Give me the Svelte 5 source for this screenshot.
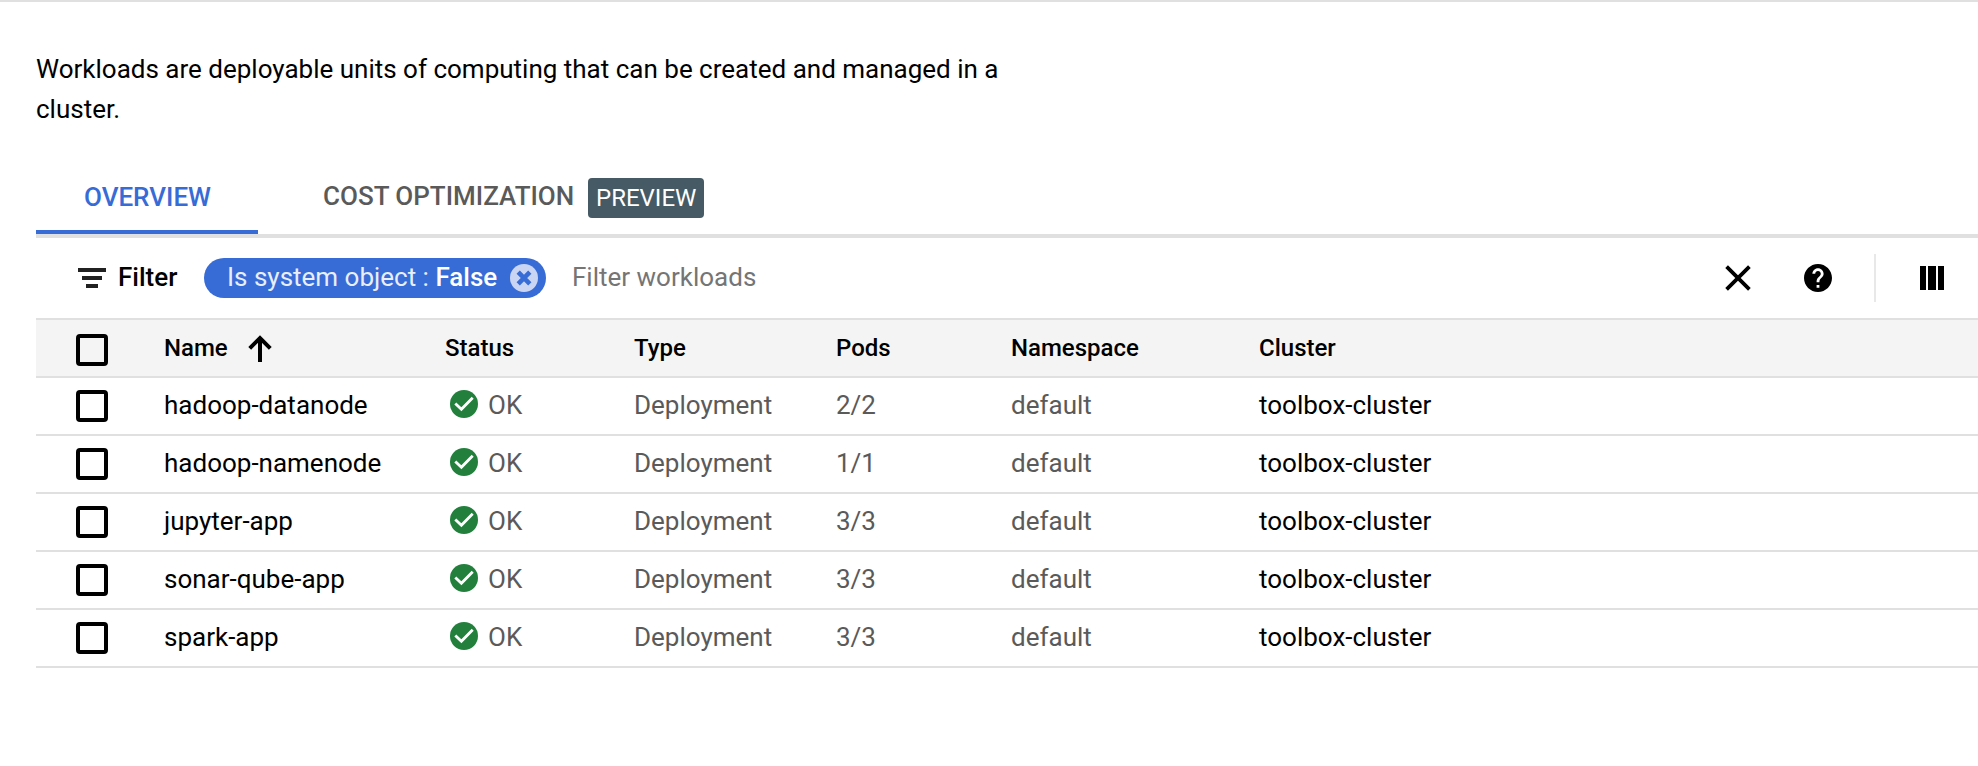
<script>
  const columns = ['Name', 'Status', 'Type', 'Pods', 'Namespace', 'Cluster'];
  const workloads = [
    { name: 'hadoop-datanode', pods: '2/2' },
    { name: 'hadoop-namenode', pods: '1/1' },
    { name: 'jupyter-app', pods: '3/3' },
    { name: 'sonar-qube-app', pods: '3/3' },
    { name: 'spark-app', pods: '3/3' }
  ];
</script>

<main>
  <p class="intro">Workloads are deployable units of computing that can be created and managed in a cluster.</p>

  <nav class="tabs">
    <div class="tab active">OVERVIEW</div>
    <div class="tab cost"><span class="label">COST OPTIMIZATION</span><span class="badge">PREVIEW</span></div>
  </nav>

  <section class="toolbar">
    <svg class="lines" width="28" height="20" viewBox="0 0 28 20" fill="#212121"><path d="M0 0h28v4H0zM4 8h20v4H4zM8 16h12v4H8z" /></svg>
    <span class="filter">Filter</span>
    <div class="chip">
      <span class="chip-text">Is system object : <b>False</b></span>
      <svg width="28" height="28" viewBox="0 0 28 28"><circle cx="14" cy="14" r="14" fill="#c9d5f3" /><path d="M8.2 8.2 19.8 19.8M19.8 8.2 8.2 19.8" stroke="#376bd6" stroke-width="4.6" /></svg>
    </div>
    <span class="placeholder">Filter workloads</span>
    <div class="actions">
      <svg class="clear" width="26" height="26" viewBox="0 0 26 26"><path d="M1.6 1.6 24.4 24.4M24.4 1.6 1.6 24.4" stroke="#000" stroke-width="3.8" /></svg>
      <svg class="help" width="28" height="28" viewBox="2 2 20 20"><path d="M12 2C6.48 2 2 6.48 2 12s4.480 10 10 10 10-4.480 10-10S17.520 2 12 2zm1 17h-2v-2h2v2zm2.070-7.750-.9.920C13.450 12.900 13 13.500 13 15h-2v-.5c0-1.100.45-2.100 1.170-2.830l1.240-1.260c.37-.36.59-.86.59-1.410 0-1.100-.9-2-2-2s-2 .9-2 2H8c0-2.210 1.790-4 4-4s4 1.790 4 4c0 .88-.36 1.680-.93 2.250z" /></svg>
      <span class="divider"></span>
      <svg class="cols" width="24" height="24" viewBox="0 0 24 24"><path d="M0 0h6v24H0zM8 0h8v24H8zM18 0h6v24h-6z" /></svg>
    </div>
  </section>

  <section class="table">
    <div class="row head">
      <span class="box"></span>
      {#each columns as column, i}
        <span class="cell">{column}{#if i === 0}<svg class="arrow" width="24" height="28" viewBox="0 0 24 28"><path d="M12 27V3M1.700 13.300 12 3l10.300 10.300" fill="none" stroke="#000" stroke-width="4" /></svg>{/if}</span>
      {/each}
    </div>
    {#each workloads as item}
      <div class="row">
        <span class="box"></span>
        <span class="cell dark">{item.name}</span>
        <span class="cell status"><svg width="28" height="28" viewBox="0 0 28 28"><circle cx="14" cy="14" r="14" fill="#22803c" /><path d="M5.300 13.400 11.400 19.300 22.700 7.800" fill="none" stroke="#fff" stroke-width="2.800" /></svg>OK</span>
        <span class="cell">Deployment</span>
        <span class="cell">{item.pods}</span>
        <span class="cell">default</span>
        <span class="cell dark">toolbox-cluster</span>
      </div>
    {/each}
  </section>
</main>

<style>
  :global(body) { background: #fff; }
  main {
    box-sizing: border-box;
    height: 766px;
    padding-left: 36px;
    border-top: 2px solid #e0e0e0;
    overflow: hidden;
    font-family: Roboto, sans-serif;
    font-size: 26px;
    color: #000;
    white-space: nowrap;
  }
  svg { display: block; flex: none; }
  .intro { width: 980px; height: 80px; margin: 0; padding-top: 47px; line-height: 40px; white-space: normal; }
  .tabs { display: flex; height: 105px; border-bottom: 4px solid #e0e0e0; font-weight: 500; color: #5a5a5a; }
  .tab { box-sizing: border-box; display: flex; align-items: flex-start; padding-top: 48px; line-height: 40px; }
  .active { width: 222px; padding-left: 48px; color: #376bd6; border-bottom: 4px solid #376bd6; }
  .cost { padding-left: 65px; }
  .label { margin-top: -1px; width: 265px; }
  .badge { box-sizing: border-box; width: 116px; height: 40px; margin-top: 1px; padding-left: 8px; border-radius: 4px; background: #455a64; color: #fff; font-weight: 400; font-size: 24px; line-height: 40px; }
  .toolbar { display: flex; align-items: center; height: 80px; padding-left: 42px; }
  .filter { width: 87px; margin-left: 12px; font-weight: 500; line-height: 40px; margin-top: -2px; }
  .chip { box-sizing: border-box; display: flex; align-items: center; justify-content: space-between; width: 342px; height: 40px; margin-left: -1px; padding: 0 8px 0 23px; border-radius: 20px; background: #376bd6; color: #e8eefa; line-height: 36px; }
  .chip-text { margin-top: -2px; }
  .chip b { font-weight: 500; color: #fff; }
  .placeholder { margin-left: 26px; margin-top: -2px; color: #757575; }
  .actions { display: flex; align-items: center; margin-left: auto; padding-right: 34px; }
  .help { margin-left: 53px; }
  .divider { width: 2px; height: 48px; margin-left: 42px; background: #e8e8e8; }
  .cols { margin-left: 44px; }
  .row { box-sizing: border-box; display: grid; grid-template-columns: 128px 281px 189px 202px 175px 248px 1fr; height: 58px; border-bottom: 2px solid #e0e0e0; line-height: 54px; color: #5a5a5a; }
  .head { height: 60px; border-top: 2px solid #e0e0e0; background: #f4f4f4; color: #000; font-size: 24px; font-weight: 500; line-height: 57px; }
  .box { box-sizing: border-box; width: 32px; height: 32px; margin: 12px 0 0 40px; border: 4px solid #000; border-radius: 4px; background: #fff; }
  .head .box { margin-top: 14px; background: transparent; }
  .cell { display: flex; }
  .dark { color: #000; }
  .arrow { margin: 15px 0 0 20px; }
  .status svg { margin: 12px 10px 0 5px; }
</style>
